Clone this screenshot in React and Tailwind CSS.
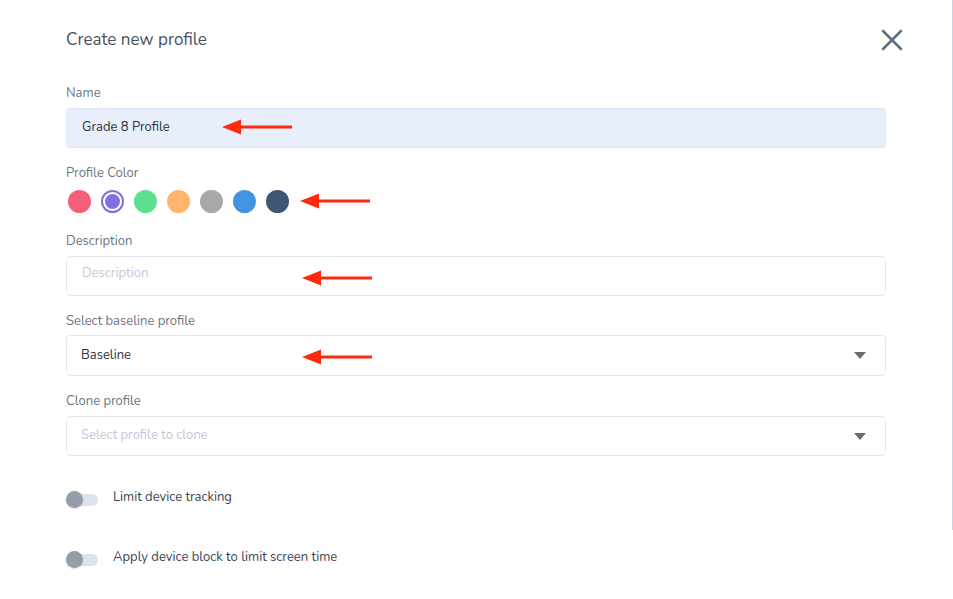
import React from "react";

function Arrow({ className }) {
  return (
    <svg className={className} width="72" height="18" viewBox="0 0 72 18">
      <polygon points="0,9 19,1.5 19,16.5" fill="#ff2a0d" />
      <rect x="17" y="7.5" width="53" height="3" fill="#ff2a0d" />
    </svg>
  );
}

function Caret() {
  return (
    <svg width="12" height="7" viewBox="0 0 12 7">
      <polygon points="0,0 12,0 6,7" fill="#6b6b6b" />
    </svg>
  );
}

function Toggle() {
  return (
    <div className="relative w-[33px] h-[17px] flex items-center">
      <div className="w-[32px] h-[12px] rounded-full bg-[#dde3ee]" />
      <div className="absolute left-0 top-0 w-[17px] h-[17px] rounded-full bg-[#939ea8] shadow-[0_1px_2px_rgba(0,0,0,0.15)]" />
    </div>
  );
}

const colors = ["#f65e7a", "#8270e0", "#5ce18e", "#ffb56b", "#a8a8a8", "#4393e3", "#3c5673"];

export default function App() {
  const font = { fontFamily: "Nunito, 'Noto Sans', Lato, sans-serif" };
  return (
    <div className="relative w-[953px] h-[599px] bg-white overflow-hidden" style={font}>
      <div className="absolute right-0 top-0 w-px h-[530px] bg-[#c9d3e6]" />
      <div className="pl-[66px] pr-[67px] pt-[28px]">
        <div className="flex items-center justify-between h-[24px]">
          <h1 className="text-[17px] text-[#4a5260] font-normal">Create new profile</h1>
          <svg width="22" height="22" viewBox="0 0 22 22" className="mr-[-17px]">
            <path d="M2 2 L20 20 M20 2 L2 20" stroke="#607080" strokeWidth="2.6" strokeLinecap="round" />
          </svg>
        </div>

        <div className="mt-[32px] text-[13px] leading-[18px] text-[#6d7480]">Name</div>
        <div className="relative mt-[6px] h-[40px] rounded-[4px] bg-[#e8effb] border border-[#dfe6f5] flex items-center pl-[15px] text-[13px] text-[#2d3440]">
          Grade 8 Profile
          <Arrow className="absolute left-[155px] top-[9px]" />
        </div>

        <div className="mt-[16px] text-[13px] leading-[18px] text-[#6d7480]">Profile Color</div>
        <div className="relative mt-[7px] flex items-center gap-[10px] h-[24px] pl-[2px]">
          {colors.map((c, i) =>
            i === 1 ? (
              <div key={c} className="w-[23px] h-[23px] rounded-full border-2 border-[#8270e0] flex items-center justify-center">
                <div className="w-[15px] h-[15px] rounded-full" style={{ backgroundColor: c }} />
              </div>
            ) : (
              <div key={c} className="w-[23px] h-[23px] rounded-full" style={{ backgroundColor: c }} />
            )
          )}
          <Arrow className="absolute left-[234px] top-[3px]" />
        </div>

        <div className="mt-[19px] text-[13px] leading-[18px] text-[#6d7480]">Description</div>
        <div className="relative mt-[6px] h-[40px] rounded-[4px] border border-[#e3e7f0] pl-[15px] pt-[7px] text-[13px] text-[#c3c8d6]">
          Description
          <Arrow className="absolute left-[235px] top-[12px]" />
        </div>

        <div className="mt-[16px] text-[13px] leading-[18px] text-[#6d7480]">Select baseline profile</div>
        <div className="relative mt-[5px] h-[41px] rounded-[4px] border border-[#e3e7f0] flex items-center justify-between pl-[14px] pr-[19px] text-[13px] text-[#2d3440]">
          <span>Baseline</span>
          <Caret />
          <Arrow className="absolute left-[235px] top-[12px]" />
        </div>

        <div className="mt-[16px] text-[13px] leading-[18px] text-[#6d7480]">Clone profile</div>
        <div className="mt-[6px] h-[40px] rounded-[4px] border border-[#e3e7f0] flex items-center justify-between pl-[14px] pr-[19px] text-[13px] text-[#c3c8d6]">
          <span>Select profile to clone</span>
          <Caret />
        </div>

        <div className="mt-[35px] flex items-center gap-[14px]">
          <Toggle />
          <span className="text-[13px] text-[#3d4450] mt-[-4px]">Limit device tracking</span>
        </div>
        <div className="mt-[43px] flex items-center gap-[14px]">
          <Toggle />
          <span className="text-[13px] text-[#3d4450] mt-[-4px]">Apply device block to limit screen time</span>
        </div>
      </div>
    </div>
  );
}
